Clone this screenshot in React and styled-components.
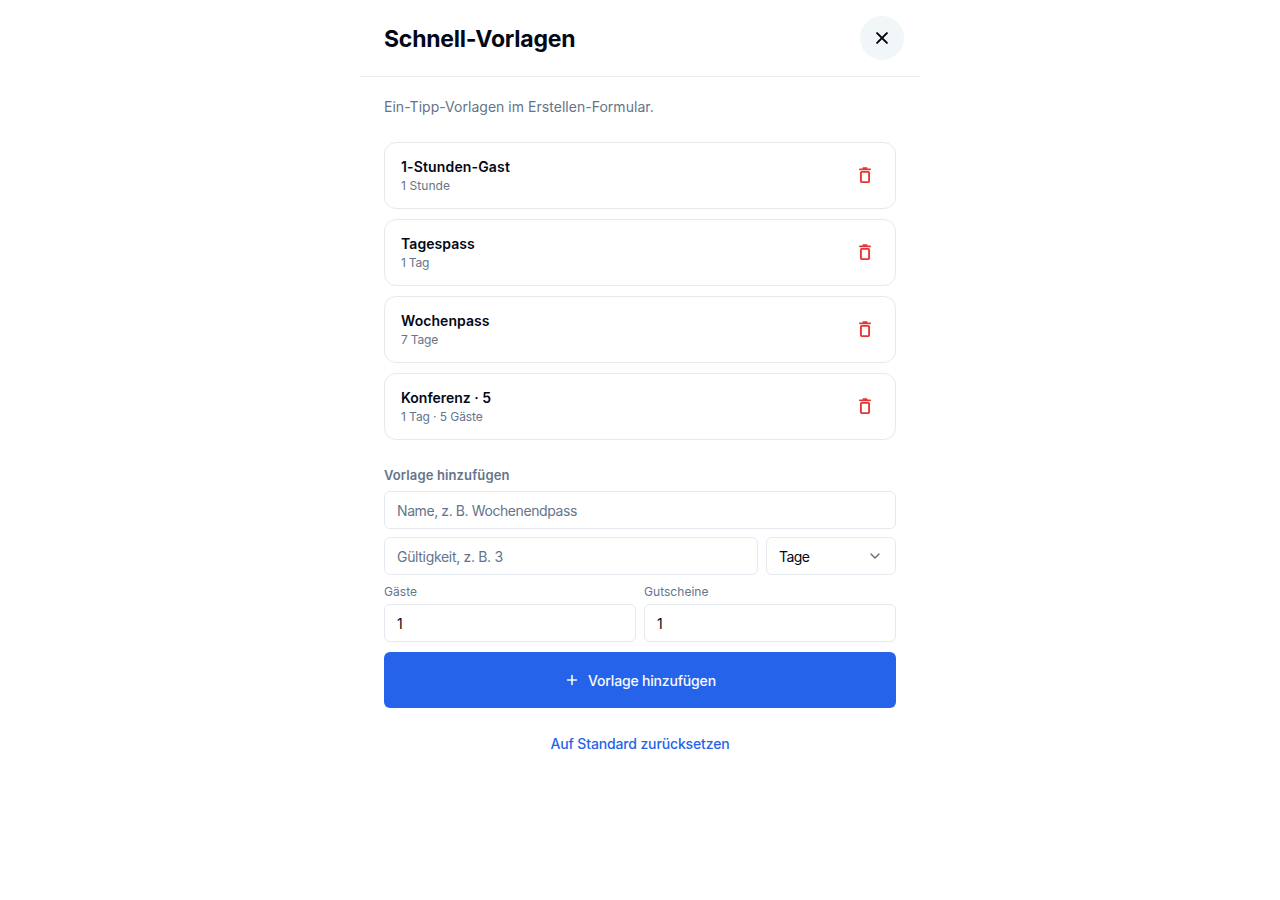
import { useState } from 'react';
import styled, { createGlobalStyle } from 'styled-components';
import { ChevronDown } from 'lucide-react';

const GlobalStyle = createGlobalStyle`
  * {
    box-sizing: border-box;
  }

  body {
    margin: 0;
    background: #fff;
    color: #020817;
    font-family: Inter, 'Liberation Sans', sans-serif;
    -webkit-font-smoothing: antialiased;
  }

  button,
  input {
    font-family: inherit;
    color: inherit;
  }
`;

const Panel = styled.main`
  width: 560px;
  height: 900px;
  margin: 0 auto;
`;

const Header = styled.header`
  display: flex;
  align-items: center;
  justify-content: space-between;
  height: 77px;
  padding: 0 16px 0 24px;
  border-bottom: 1px solid #e7edf0;
`;

const Title = styled.h1`
  margin: 2px 0 0;
  font-size: 23px;
  line-height: 32px;
  font-weight: 700;
  letter-spacing: -0.22px;
`;

const CloseButton = styled.button`
  display: flex;
  align-items: center;
  justify-content: center;
  width: 44px;
  height: 44px;
  padding: 0;
  border: none;
  border-radius: 50%;
  background: #f1f6f9;
  color: #020407;
  cursor: pointer;
`;

const Body = styled.div`
  padding: 20px 24px;
`;

const Intro = styled.p`
  margin: 0 0 25px;
  font-size: 14px;
  line-height: 20px;
  letter-spacing: 0.03px;
  color: #64748b;
`;

const TemplateList = styled.div`
  display: flex;
  flex-direction: column;
  gap: 10px;
`;

const TemplateCard = styled.div`
  display: flex;
  align-items: center;
  justify-content: space-between;
  height: 67px;
  padding: 0 20px 0 16px;
  border: 1px solid #e5eaee;
  border-radius: 12px;
`;

const TemplateName = styled.div`
  font-size: 14px;
  line-height: 20px;
  font-weight: 600;
  letter-spacing: ${(props) => props.$spacing || 0}px;
`;

const TemplateMeta = styled.div`
  font-size: 12px;
  line-height: 18px;
  color: #64748b;
  letter-spacing: ${(props) => props.$spacing || 0}px;
`;

const DeleteButton = styled.button`
  display: flex;
  padding: 0 0 1px;
  border: none;
  background: none;
  color: #e53535;
  cursor: pointer;
`;

const Form = styled.form`
  display: flex;
  flex-direction: column;
  margin-top: 25px;
`;

const FormTitle = styled.h2`
  margin: 0 0 6px;
  font-size: 13px;
  line-height: 20px;
  font-weight: 600;
  letter-spacing: 0.12px;
  color: #64748b;
`;

const Row = styled.div`
  display: grid;
  grid-template-columns: ${(props) => props.$columns};
  gap: 8px;
  margin-top: 8px;
`;

const Input = styled.input`
  display: block;
  width: 100%;
  height: 38px;
  padding: 0 12px;
  border: 1px solid #e4eaf0;
  border-radius: 6px;
  background: #fff;
  font-size: 14px;
  outline: none;

  &::placeholder {
    color: #64748b;
    opacity: 1;
    letter-spacing: ${(props) => props.$spacing || 0}px;
  }
`;

const SelectButton = styled.button`
  display: flex;
  align-items: center;
  justify-content: space-between;
  height: 38px;
  padding: 0 12px;
  border: 1px solid #e4eaf0;
  border-radius: 6px;
  background: #fff;
  font-size: 14px;
  letter-spacing: -0.6px;

  svg {
    opacity: 0.6;
  }
`;

const Label = styled.label`
  font-size: 12px;
  color: #64748b;

  span {
    display: block;
    height: 21px;
    line-height: 18px;
    letter-spacing: 0.04px;
  }
`;

const SubmitButton = styled.button`
  display: flex;
  align-items: center;
  justify-content: center;
  gap: 8px;
  height: 56px;
  margin-top: 10px;
  border: none;
  border-radius: 6px;
  background: #2563eb;
  color: #f8fafc;
  font-size: 14px;
  font-weight: 500;
  letter-spacing: -0.18px;
  cursor: pointer;
`;

const ResetButton = styled.button`
  display: block;
  margin: 26px auto 0;
  padding: 0;
  border: none;
  background: none;
  color: #2563eb;
  font-size: 14px;
  line-height: 20px;
  font-weight: 500;
  letter-spacing: -0.14px;
  cursor: pointer;
`;

const Value = styled(Input)`
  color: #020817;
`;

const CloseIcon = () => (
  <svg width="20" height="20" viewBox="0 0 20 20" fill="none">
    <path d="M5.1 5.1l9.8 9.8M14.9 5.1l-9.8 9.8" stroke="currentColor" strokeWidth="2" strokeLinecap="round" />
  </svg>
);

const TrashIcon = () => (
  <svg width="20" height="20" viewBox="0 0 20 20" fill="none" stroke="currentColor">
    <path d="M8.2 3.1h3.6" strokeWidth="1.6" strokeLinecap="round" />
    <path d="M4.9 4.3h10.2" strokeWidth="1.8" strokeLinecap="round" />
    <rect x="5.9" y="6.9" width="8.2" height="10.2" rx="0.8" strokeWidth="1.9" />
  </svg>
);

const PlusIcon = () => (
  <svg width="16" height="16" viewBox="0 0 16 16" fill="none">
    <path d="M8 3.6v8.8M3.6 8h8.8" stroke="currentColor" strokeWidth="1.6" strokeLinecap="round" />
  </svg>
);

const initialTemplates = [
  { name: '1-Stunden-Gast', meta: '1 Stunde', nameSpacing: 0.15, metaSpacing: 0.08 },
  { name: 'Tagespass', meta: '1 Tag', nameSpacing: 0.06, metaSpacing: -0.2 },
  { name: 'Wochenpass', meta: '7 Tage', nameSpacing: 0.06, metaSpacing: -0.2 },
  { name: 'Konferenz · 5', meta: '1 Tag · 5 Gäste', nameSpacing: 0, metaSpacing: -0.08 },
];

export default function App() {
  const [templates, setTemplates] = useState(initialTemplates);

  const removeTemplate = (name) => {
    setTemplates(templates.filter((template) => template.name !== name));
  };

  return (
    <>
      <GlobalStyle />
      <Panel>
        <Header>
          <Title>Schnell-Vorlagen</Title>
          <CloseButton aria-label="Schließen">
            <CloseIcon />
          </CloseButton>
        </Header>
        <Body>
          <Intro>Ein-Tipp-Vorlagen im Erstellen-Formular.</Intro>
          <TemplateList>
            {templates.map((template) => (
              <TemplateCard key={template.name}>
                <div>
                  <TemplateName $spacing={template.nameSpacing}>{template.name}</TemplateName>
                  <TemplateMeta $spacing={template.metaSpacing}>{template.meta}</TemplateMeta>
                </div>
                <DeleteButton
                  aria-label="Löschen"
                  onClick={() => removeTemplate(template.name)}
                >
                  <TrashIcon />
                </DeleteButton>
              </TemplateCard>
            ))}
          </TemplateList>
          <Form onSubmit={(event) => event.preventDefault()}>
            <FormTitle>Vorlage hinzufügen</FormTitle>
            <Input placeholder="Name, z. B. Wochenendpass" $spacing={-0.41} />
            <Row $columns="1fr 130px">
              <Input placeholder="Gültigkeit, z. B. 3" $spacing={-0.32} />
              <SelectButton type="button">
                Tage
                <ChevronDown size={16} />
              </SelectButton>
            </Row>
            <Row $columns="1fr 1fr">
              <Label>
                <span>Gäste</span>
                <Value defaultValue="1" />
              </Label>
              <Label>
                <span>Gutscheine</span>
                <Value defaultValue="1" />
              </Label>
            </Row>
            <SubmitButton>
              <PlusIcon />
              Vorlage hinzufügen
            </SubmitButton>
          </Form>
          <ResetButton onClick={() => setTemplates(initialTemplates)}>
            Auf Standard zurücksetzen
          </ResetButton>
        </Body>
      </Panel>
    </>
  );
}
